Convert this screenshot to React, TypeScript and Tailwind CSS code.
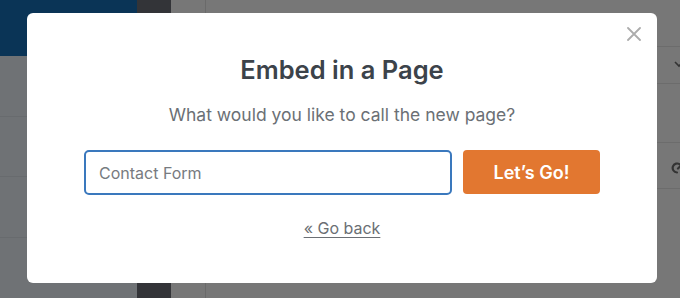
import React from 'react';

const font = { fontFamily: 'Inter, "Noto Sans", sans-serif' };

export default function App() {
    return (
        <div className="relative w-[680px] h-[298px] overflow-hidden flex bg-[#777777]" style={font}>
            {/* Page behind the overlay */}
            <div className="w-[137px] flex flex-col bg-[#6f7275]">
                <div className="h-[56px] bg-[#0a3456]" />
                <div className="h-[61px] border-b border-[#686b6e]" />
                <div className="h-[60px] border-b border-[#686b6e]" />
                <div className="h-[61px] border-b border-[#686b6e]" />
            </div>
            <div className="w-[34px] bg-[#333438]" />
            <div className="w-[35px] border-r border-[#6a6a6a]" />
            <div className="flex-1 flex flex-col">
                <div className="h-[47px] border-b border-[#6c6c6c]" />
                <div className="h-[37px] border-b border-[#6c6c6c] flex items-center justify-end">
                    {/* chevron, clipped at the edge */}
                    <svg width="10" height="8" viewBox="0 0 10 8" fill="none" stroke="#333" strokeWidth="1.6" className="-mr-[4px] mt-[-2px]">
                        <path d="M1 2l4 4 4-4" />
                    </svg>
                </div>
                <div className="h-[59px] border-b border-[#6c6c6c]" />
                <div className="h-[46px] border-b border-[#6c6c6c] flex items-center justify-end">
                    {/* link icon, clipped at the edge */}
                    <svg width="14" height="14" viewBox="0 0 14 14" fill="none" stroke="#333" strokeWidth="2.2" strokeLinecap="round" className="-mr-[5px] mt-[4px]">
                        <path d="M9 3.5A4.5 4.5 0 1 0 6 11.5" />
                        <path d="M7 7.5l4-4" />
                    </svg>
                </div>
            </div>

            {/* Modal */}
            <div className="absolute left-[27px] top-[13px] w-[630px] h-[270px] bg-white rounded-[6px] flex flex-col items-center pt-[41px]">
                <button className="absolute top-[14px] right-[16px] w-[14px] h-[14px]">
                    <svg width="14" height="14" viewBox="0 0 14 14" fill="none" stroke="#acacac" strokeWidth="1.8" strokeLinecap="round">
                        <path d="M1 1l12 12M13 1L1 13" />
                    </svg>
                </button>
                <h2 className="text-[25.5px] leading-[32px] font-semibold text-[#3c434a]">Embed in a Page</h2>
                <p className="mt-[17px] text-[17.5px] leading-[24px] text-[#6b7075]">What would you like to call the new page?</p>
                <div className="mt-[23px] flex gap-[11px]">
                    <div className="w-[368px] h-[45px] border-2 border-[#3a78bd] rounded-[5px] flex items-center px-[13px] text-[16px] text-[#777b80]">
                        Contact Form
                    </div>
                    <button className="w-[137px] h-[44px] bg-[#e27730] rounded-[4px] text-white text-[18px] font-semibold">
                        Let’s Go!
                    </button>
                </div>
                <a className="mt-[21px] text-[16px] leading-[24px] text-[#6b6f74] underline underline-offset-[3px]">« Go back</a>
            </div>
        </div>
    );
}
